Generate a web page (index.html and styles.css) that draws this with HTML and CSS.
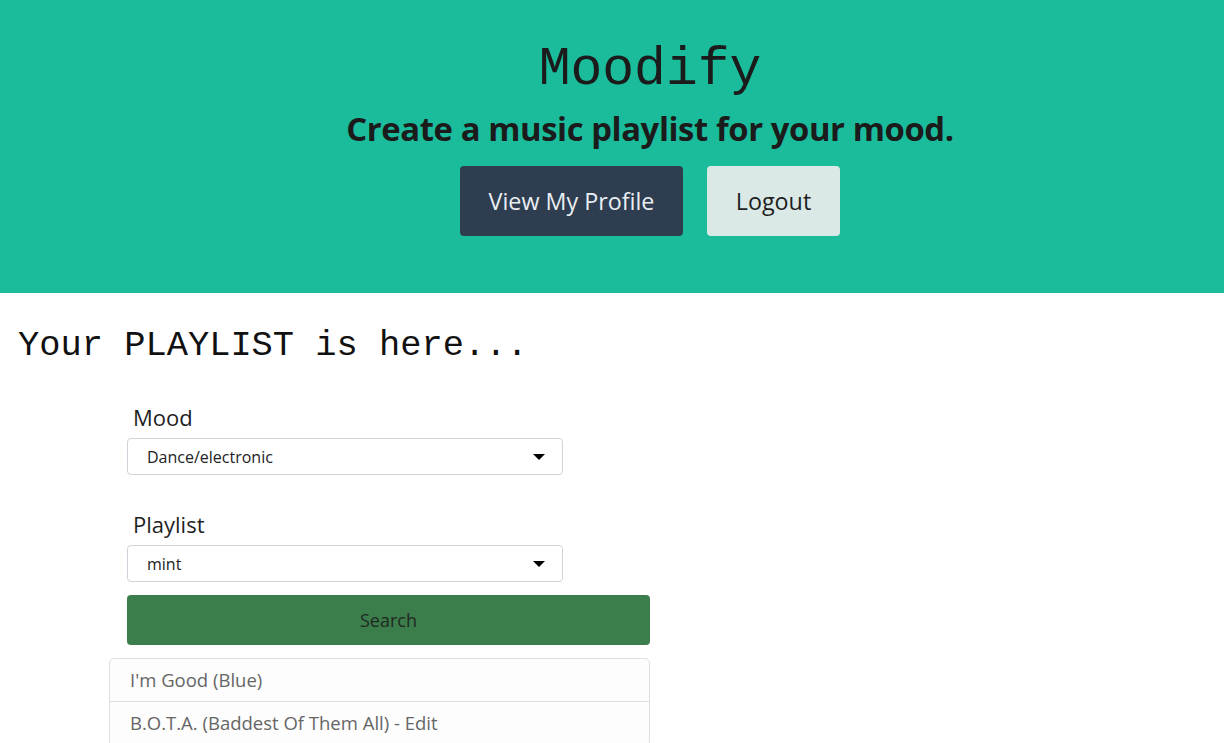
FILE: index.html
```html
<!DOCTYPE html>
<html>
<head>
<meta charset="utf-8">
<link rel="stylesheet" href="styles.css">
</head>
<body>
<header class="hero">
  <h1 class="brand">Moodify</h1>
  <h2 class="tagline">Create a music playlist for your mood.</h2>
  <div class="actions">
    <button class="btn btn-dark">View My Profile</button>
    <button class="btn btn-light">Logout</button>
  </div>
</header>
<main class="content">
  <h3 class="title">Your PLAYLIST is here...</h3>
  <form class="form">
    <label class="label">Mood</label>
    <div class="select"><span>Dance/electronic</span><i class="caret"></i></div>
    <label class="label label-gap">Playlist</label>
    <div class="select"><span>mint</span><i class="caret"></i></div>
    <button type="button" class="search">Search</button>
  </form>
  <ul class="tracks">
    <li>I'm Good (Blue)</li>
    <li>B.O.T.A. (Baddest Of Them All) - Edit</li>
  </ul>
</main>
</body>
</html>
```
FILE: styles.css
```css
* { box-sizing: border-box; }
html, body { margin: 0; padding: 0; }
body { font-family: "Open Sans", "Noto Sans", sans-serif; color: #212529; background: #fff; overflow: hidden; height: 743px; }
.hero { background: #1abc9c; height: 293px; padding: 35px 0 0 76px; display: flex; flex-direction: column; align-items: center; }
.brand { font-family: "Liberation Mono", "DejaVu Sans Mono", monospace; font-weight: 400; font-size: 53px; line-height: 70px; margin: 0; color: #1b1b1b; }
.tagline { font-size: 32.8px; font-weight: 700; margin: 2px 0 0; line-height: 44px; color: #1b1b1b; letter-spacing: -0.4px; }
.actions { display: flex; gap: 24px; margin-top: 15px; }
.btn { font-family: inherit; font-size: 23.3px; border: 0; border-radius: 4px; height: 70px; padding: 0; }
.btn-dark { background: #2e3d50; color: #e9eef2; width: 223px; }
.btn-light { background: #dae9e6; color: #1f1f1f; width: 133px; }
.content { padding: 0 0 0 18px; }
.title { font-family: "Liberation Mono", "DejaVu Sans Mono", monospace; font-weight: 400; font-size: 35.4px; margin: 31px 0 0; line-height: 44px; color: #111; }
.form { margin: 34px 0 0 109px; width: 523px; display: flex; flex-direction: column; }
.label { font-size: 22px; color: #1f1f1f; padding-left: 6px; line-height: 30px; margin-bottom: 6px; }
.label-gap { margin-top: 34px; }
.select { width: 436px; height: 37px; border: 1px solid #ced4da; border-radius: 4px; display: flex; align-items: center; justify-content: space-between; padding: 0 17px 0 19px; font-size: 16px; color: #222; }
.caret { width: 0; height: 0; border-left: 6px solid transparent; border-right: 6px solid transparent; border-top: 6px solid #000; }
.search { margin-top: 13px; height: 50px; width: 523px; background: #3c7d4c; border: 0; border-radius: 4px; font-family: inherit; font-size: 18px; color: #1f2a22; }
.tracks { list-style: none; margin: 13px 0 0 91px; padding: 0; width: 541px; border: 1px solid #dfdfdf; border-radius: 5px; background: #fdfdfd; }
.tracks li { height: 43px; line-height: 42px; padding-left: 20px; font-size: 18.5px; color: #666; border-bottom: 1px solid #dfdfdf; }
```
